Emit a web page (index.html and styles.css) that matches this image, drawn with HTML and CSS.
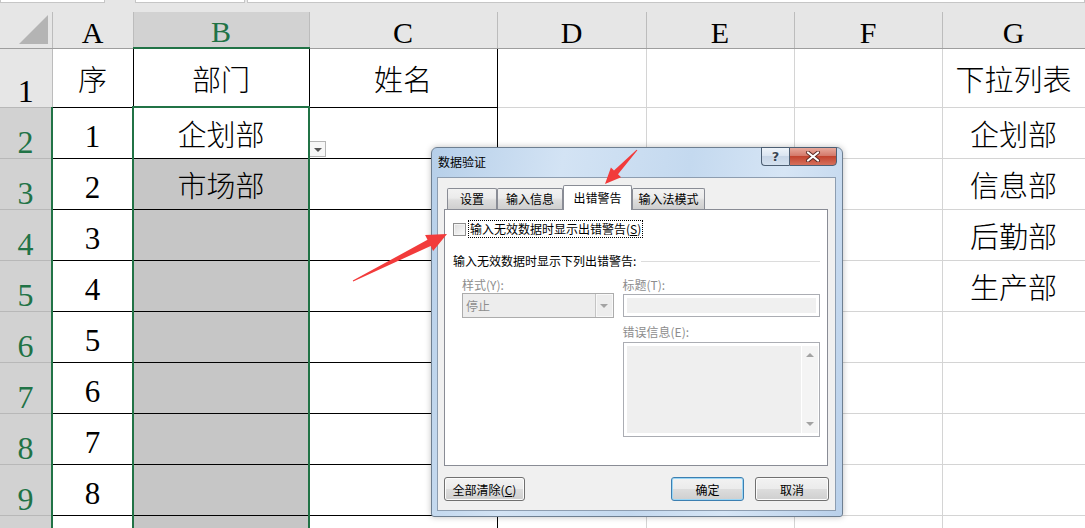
FILE: index.html
```html
<!DOCTYPE html>
<html lang="zh-CN">
<head>
  <meta charset="UTF-8">
  <meta name="viewport" content="width=device-width, initial-scale=1.0">
  <title>数据验证</title>
  <link rel="stylesheet" href="styles.css">
</head>
<body>
  <div class="app">
    <div class="edge">
      <span class="edge-box b1"></span>
      <span class="edge-box b2"></span>
      <span class="edge-box b3"></span>
    </div>

    <table class="sheet">
      <colgroup>
        <col style="width:52px"><col style="width:81px"><col style="width:176px"><col style="width:188px">
        <col style="width:149px"><col style="width:148px"><col style="width:148px"><col style="width:143px">
      </colgroup>
      <tr class="head-row">
        <th class="ch corner">
          <svg class="corner-mark" width="51" height="35" viewBox="0 0 51 35"><polygon points="19,32 48,32 48,3" fill="#b4b4b4"/></svg>
        </th>
        <th class="ch">A</th>
        <th class="ch ch-sel">B</th>
        <th class="ch">C</th>
        <th class="ch">D</th>
        <th class="ch">E</th>
        <th class="ch">F</th>
        <th class="ch">G</th>
      </tr>
      <tr class="row-1">
        <th class="rh">1</th>
        <td class="bx">序</td>
        <td class="bx">部门</td>
        <td class="bx">姓名</td>
        <td></td><td></td><td></td>
        <td>下拉列表</td>
      </tr>
      <tr class="row">
        <th class="rh rh-sel">2</th>
        <td class="bx num">1</td>
        <td class="bx sel sel-top">企划部</td>
        <td class="bx dd-cell"><span class="dd"></span></td>
        <td></td><td></td><td></td>
        <td>企划部</td>
      </tr>
      <tr class="row">
        <th class="rh rh-sel">3</th>
        <td class="bx num">2</td>
        <td class="bx sel fill">市场部</td>
        <td class="bx"></td>
        <td></td><td></td><td></td>
        <td>信息部</td>
      </tr>
      <tr class="row">
        <th class="rh rh-sel">4</th>
        <td class="bx num">3</td>
        <td class="bx sel fill"></td>
        <td class="bx"></td>
        <td></td><td></td><td></td>
        <td>后勤部</td>
      </tr>
      <tr class="row">
        <th class="rh rh-sel">5</th>
        <td class="bx num">4</td>
        <td class="bx sel fill"></td>
        <td class="bx"></td>
        <td></td><td></td><td></td>
        <td>生产部</td>
      </tr>
      <tr class="row">
        <th class="rh rh-sel">6</th>
        <td class="bx num">5</td>
        <td class="bx sel fill"></td>
        <td class="bx"></td>
        <td></td><td></td><td></td><td></td>
      </tr>
      <tr class="row">
        <th class="rh rh-sel">7</th>
        <td class="bx num">6</td>
        <td class="bx sel fill"></td>
        <td class="bx"></td>
        <td></td><td></td><td></td><td></td>
      </tr>
      <tr class="row">
        <th class="rh rh-sel">8</th>
        <td class="bx num">7</td>
        <td class="bx sel fill"></td>
        <td class="bx"></td>
        <td></td><td></td><td></td><td></td>
      </tr>
      <tr class="row">
        <th class="rh rh-sel">9</th>
        <td class="bx num">8</td>
        <td class="bx sel fill"></td>
        <td class="bx"></td>
        <td></td><td></td><td></td><td></td>
      </tr>
      <tr class="row">
        <th class="rh rh-sel"></th>
        <td class="bx"></td>
        <td class="bx sel fill"></td>
        <td class="bx"></td>
        <td></td><td></td><td></td><td></td>
      </tr>
    </table>

    <!-- data validation dialog -->
    <div class="dialog">
      <div class="titlebar">
        <span class="title">数据验证</span>
        <div class="caption">
          <span class="cap cap-help">?</span>
          <span class="cap cap-close">
            <svg width="16" height="11" viewBox="0 0 16 11">
              <path d="M3 1.5 L13 9.5 M13 1.5 L3 9.5" stroke="#5a2a24" stroke-width="4" stroke-linecap="round"/>
              <path d="M3 1.5 L13 9.5 M13 1.5 L3 9.5" stroke="#fff" stroke-width="2.2" stroke-linecap="round"/>
            </svg>
          </span>
        </div>
      </div>

      <div class="client">
        <div class="tabs">
          <span class="tab t-set">设置</span>
          <span class="tab t-info">输入信息</span>
          <span class="tab t-err active">出错警告</span>
          <span class="tab t-ime">输入法模式</span>
        </div>

        <div class="panel">
          <div class="check-row">
            <span class="checkbox"></span>
            <span class="check-label">输入无效数据时显示出错警告(<u>S</u>)</span>
          </div>
          <div class="group-title">输入无效数据时显示下列出错警告:</div>
          <div class="fields">
            <div class="field-left">
              <div class="lbl">样式(Y):</div>
              <div class="select">
                <span class="select-text">停止</span>
                <span class="select-btn"><span class="tri-down"></span></span>
              </div>
            </div>
            <div class="field-right">
              <div class="lbl">标题(T):</div>
              <div class="textbox"></div>
              <div class="lbl lbl-gap">错误信息(E):</div>
              <div class="textarea">
                <div class="ta-fill"></div>
                <div class="ta-scroll">
                  <span class="tri-up"></span>
                  <span class="tri-down"></span>
                </div>
              </div>
            </div>
          </div>
        </div>

        <div class="actions">
          <button class="btn btn-clear">全部清除(<u>C</u>)</button>
          <button class="btn btn-ok">确定</button>
          <button class="btn btn-cancel">取消</button>
        </div>
      </div>
    </div>

    <!-- red annotation arrows -->
    <svg class="marks" width="1085" height="528" viewBox="0 0 1085 528">
      <polygon fill="#f23b3b" points="636.6,149.7 614.0,170.5 610.9,167.6 605,184 621.1,177.2 618.0,174.3 637.4,150.3"/>
      <polygon fill="#f23b3b" points="352.8,280.6 427.5,239.8 425.1,234.9 447,234 433.1,250.9 430.7,246.0 353.2,281.4"/>
    </svg>
  </div>
</body>
</html>
```

FILE: styles.css
```css
body {
  margin: 0;
  padding: 0;
  background-color: #fff;
  font-family: "Noto Sans CJK SC", sans-serif;
  overflow: hidden;
}

.app {
  position: relative;
  width: 1085px;
  height: 528px;
  overflow: hidden;
}

/* strip under the formula bar */
.edge {
  display: flex;
  height: 12px;
  background-color: #e6e6e6;
}

.edge-box {
  height: 2px;
  background-color: #fff;
  border: 1px solid #c6c6c6;
  border-top: none;
}

.edge-box.b1 { width: 103px; }
.edge-box.b2 { width: 108px; margin-left: 30px; }
.edge-box.b3 { flex: 1; margin-left: 2px; }

/* worksheet */
.sheet {
  border-collapse: collapse;
  table-layout: fixed;
  width: 1085px;
  font-family: "Liberation Serif", "Noto Sans CJK SC", serif;
}

.head-row { height: 36px; }
.row-1 { height: 59px; }
.row { height: 51px; }

.sheet th {
  font-weight: normal;
  padding: 0;
  line-height: 1;
  background-color: #e6e6e6;
  color: #000;
}

.ch {
  font-size: 30px;
  vertical-align: bottom;
  padding-bottom: 0;
  border-right: 1px solid #bcbcbc;
  border-bottom: 1px solid #9e9e9e;
}

.ch-sel {
  background-color: #d2d2d2 !important;
  color: #217346 !important;
  border-bottom: 2px solid #217346;
}

.corner {
  vertical-align: top;
}

.corner-mark {
  display: block;
}

.rh {
  font-size: 32px;
  vertical-align: bottom;
  border-right: 1px solid #bcbcbc;
  border-bottom: 1px solid #b8b8b8;
}

.rh-sel {
  background-color: #d2d2d2 !important;
  color: #217346 !important;
  border-right: 2px solid #217346;
}

.sheet td {
  border: 1px solid #d4d4d4;
  text-align: center;
  vertical-align: middle;
  font-size: 29px;
  font-weight: 300;
  line-height: 1;
  padding: 7px 0 0 0;
  color: #000;
}

.sheet td.bx {
  border: 1px solid #000;
}

.sheet td.num {
  font-size: 31px;
  font-weight: normal;
}

.sheet td.sel {
  border-left: 2px solid #217346;
  border-right: 2px solid #217346;
}

.sheet td.sel-top {
  border-top: 2px solid #217346;
}

.sheet td.fill {
  background-color: #c6c6c6;
}

.dd-cell {
  position: relative;
}

.dd {
  position: absolute;
  left: 0;
  bottom: 1px;
  width: 16px;
  height: 16px;
  box-sizing: border-box;
  background-color: #f7f7f7;
  border: 1px solid #b5b5b5;
  border-left: none;
}

.dd::after {
  content: "";
  position: absolute;
  left: 4px;
  top: 6px;
  border-left: 4px solid transparent;
  border-right: 4px solid transparent;
  border-top: 4px solid #555;
}

/* dialog */
.dialog {
  position: absolute;
  left: 431px;
  top: 147px;
  width: 412px;
  height: 370px;
  box-sizing: border-box;
  border: 1px solid #6e7f91;
  border-radius: 6px 6px 3px 3px;
  padding: 0 6px 5px 5px;
  background: linear-gradient(100deg, #b6cfe9 0%, #d3e3f4 28%, #c4d9ef 55%, #d6e5f5 75%, #b9d0ea 100%);
  box-shadow: 0 0 6px rgba(0, 0, 0, 0.25);
  display: flex;
  flex-direction: column;
  font-family: "Noto Sans CJK SC", sans-serif;
  font-size: 12px;
  color: #000;
}

.titlebar {
  height: 29px;
  flex-shrink: 0;
  display: flex;
  justify-content: space-between;
  align-items: flex-start;
}

.title {
  margin: 6px 0 0 1px;
  line-height: 16px;
}

.caption {
  display: flex;
  margin: -1px -1px 0 0;
}

.cap {
  height: 19px;
  box-sizing: border-box;
  border: 1px solid #4d5f73;
  display: flex;
  align-items: center;
  justify-content: center;
}

.cap-help {
  width: 28px;
  border-right: none;
  border-radius: 0 0 0 4px;
  background: linear-gradient(#eef3f9, #dbe5f1 45%, #c7d5e6 50%, #d4e1ef);
  color: #3a4552;
  font-family: "DejaVu Sans", sans-serif;
  font-weight: bold;
  font-size: 13px;
  text-shadow: 0 0 2px #fff;
}

.cap-close {
  width: 48px;
  border-radius: 0 0 4px 0;
  background: linear-gradient(#e8a99c, #d47a6b 45%, #c2442f 50%, #d6705c);
}

.client {
  flex: 1;
  background-color: #f0f0f0;
  border: 1px solid #8d9db0;
  padding: 7px 7px 0 6px;
  display: flex;
  flex-direction: column;
}

.tabs {
  display: flex;
  align-items: flex-end;
  height: 24px;
  margin-left: 3px;
  position: relative;
  z-index: 1;
}

.tab {
  box-sizing: border-box;
  height: 21px;
  border: 1px solid #898c95;
  border-bottom: none;
  border-radius: 2px 2px 0 0;
  background: linear-gradient(#f2f2f2, #ebebeb 45%, #dddddd 55%, #cfcfcf);
  text-align: center;
  line-height: 20px;
}

.tab.active {
  height: 25px;
  margin-bottom: -1px;
  background: #fff;
  line-height: 24px;
}

.t-set { width: 50px; }
.t-info { width: 66px; }
.t-err { width: 69px; }
.t-ime { width: 73px; }

.panel {
  height: 257px;
  box-sizing: border-box;
  border: 1px solid #898c95;
  background-color: #fff;
  padding: 10px 7px 0 8px;
}

.check-row {
  display: flex;
  align-items: center;
  height: 18px;
}

.checkbox {
  width: 13px;
  height: 13px;
  box-sizing: border-box;
  border: 1px solid #8f8f8f;
  background: linear-gradient(135deg, #dcdcdc, #fbfbfb);
  box-shadow: inset 0 0 0 1px #f4f4f4;
}

.check-label {
  margin-left: 2px;
  border: 1px dotted #000;
  padding: 0 1px;
  line-height: 16px;
}

.group-title {
  display: flex;
  align-items: center;
  margin-top: 15px;
  line-height: 16px;
}

.group-title::after {
  content: "";
  flex: 1;
  height: 1px;
  margin-left: 5px;
  background-color: #dcdcdc;
}

.fields {
  display: flex;
  margin-top: 8px;
  padding-left: 9px;
}

.field-left { width: 152px; }

.field-right {
  width: 198px;
  margin-left: 9px;
}

.lbl {
  line-height: 16px;
  color: #8d8d8d;
}

.lbl-gap { margin-top: 7px; }

.select {
  display: flex;
  height: 25px;
  box-sizing: border-box;
  border: 1px solid #acacac;
  background-color: #ededed;
}

.select-text {
  flex: 1;
  padding-left: 3px;
  line-height: 23px;
  color: #8d8d8d;
}

.select-btn {
  width: 17px;
  border-left: 1px solid #c4c4c4;
  box-shadow: inset 0 0 0 1px #f8f8f8;
  display: flex;
  align-items: center;
  justify-content: center;
}

.tri-down {
  width: 0;
  height: 0;
  border-left: 4px solid transparent;
  border-right: 4px solid transparent;
  border-top: 4px solid #a3a3a3;
}

.tri-up {
  width: 0;
  height: 0;
  border-left: 4px solid transparent;
  border-right: 4px solid transparent;
  border-bottom: 4px solid #a3a3a3;
}

.textbox {
  margin-top: 1px;
  height: 23px;
  box-sizing: border-box;
  border: 1px solid #abadb3;
  background-color: #f0f0f0;
  box-shadow: inset 0 0 0 3px #fff;
}

.textarea {
  display: flex;
  margin-top: 2px;
  height: 95px;
  box-sizing: border-box;
  border: 1px solid #abadb3;
  background-color: #fff;
  padding: 3px 1px 3px 3px;
}

.ta-fill {
  flex: 1;
  background-color: #efefef;
}

.ta-scroll {
  width: 16px;
  margin-left: 1px;
  background-color: #f4f4f4;
  display: flex;
  flex-direction: column;
  align-items: center;
  justify-content: space-between;
  padding: 7px 0 7px;
  box-sizing: border-box;
}

.actions {
  display: flex;
  margin-top: 11px;
  margin-right: -1px;
}

.btn {
  height: 24px;
  box-sizing: border-box;
  border: 1px solid #707070;
  border-radius: 3px;
  background: linear-gradient(#f2f2f2, #ebebeb 50%, #dddddd 50%, #cfcfcf);
  box-shadow: inset 0 0 0 1px #fcfcfc;
  font-family: "Noto Sans CJK SC", sans-serif;
  font-size: 12px;
  color: #000;
  padding: 0;
}

.btn-clear { width: 81px; }

.btn-ok {
  width: 73px;
  margin-left: auto;
  border-color: #3c7fb1;
  box-shadow: inset 0 0 0 1px #9ad6f5;
}

.btn-cancel {
  width: 74px;
  margin-left: 11px;
}

.marks {
  position: absolute;
  left: 0;
  top: 0;
  pointer-events: none;
}
```
